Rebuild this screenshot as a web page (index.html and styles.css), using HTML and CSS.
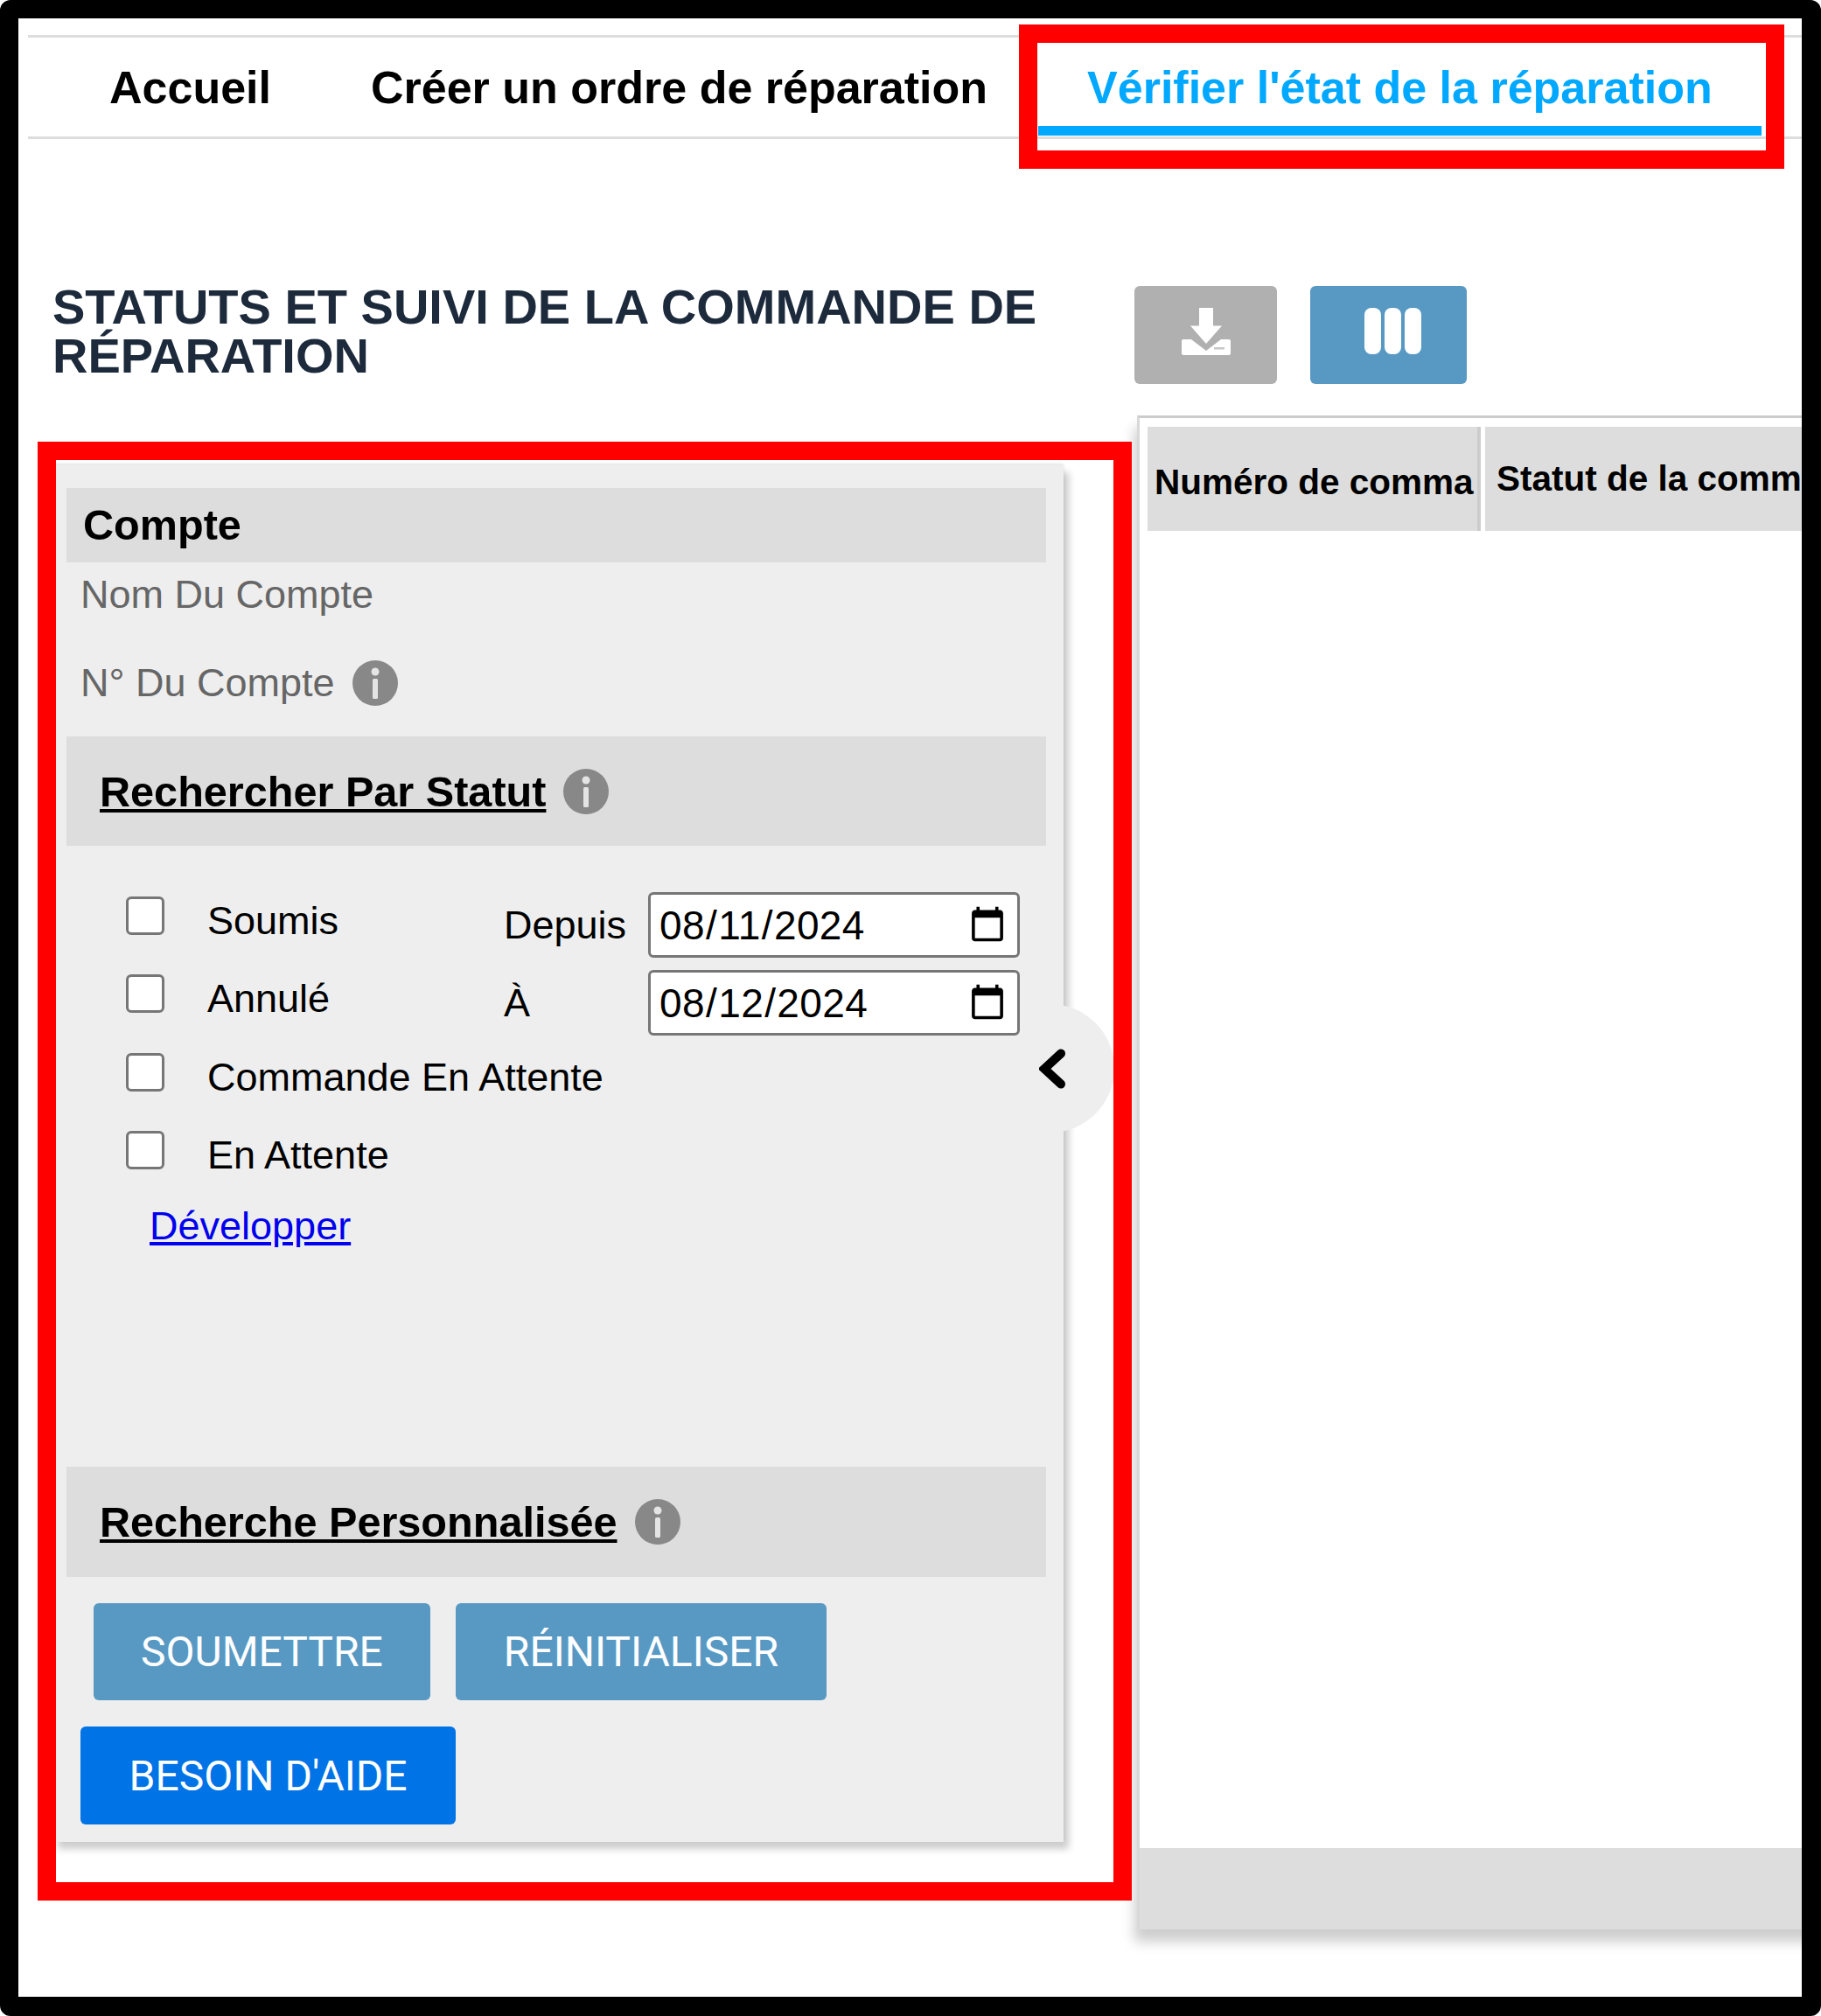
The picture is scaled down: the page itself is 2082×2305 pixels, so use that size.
FILE: index.html
```html
<!DOCTYPE html>
<html lang="fr">
<head>
<meta charset="utf-8">
<title>Statuts et suivi</title>
<link rel="stylesheet" href="styles.css">
</head>
<body>
<svg class="defs" width="0" height="0" aria-hidden="true">
  <symbol id="info" viewBox="0 0 52 52">
    <circle cx="26" cy="26" r="26" fill="#888"/>
    <circle cx="26" cy="13" r="4.5" fill="#e4e4e4"/>
    <rect x="23" y="21" width="6" height="23" rx="1.5" fill="#e4e4e4"/>
  </symbol>
</svg>
<div class="frame">
  <nav class="nav">
    <a class="tab">Accueil</a>
    <a class="tab">Créer un ordre de réparation</a>
    <a class="tab tab-active">Vérifier l'état de la réparation</a>
  </nav>
  <div class="main">
    <div class="left">
      <h1 class="title">STATUTS ET SUIVI DE LA COMMANDE DE RÉPARATION</h1>
      <aside class="panel">
        <div class="sec sec-account">Compte</div>
        <div class="field">Nom Du Compte</div>
        <div class="field field-info">N° Du Compte <svg class="info"><use href="#info"/></svg></div>
        <div class="sec sec-link"><a>Rechercher Par Statut</a><svg class="info"><use href="#info"/></svg></div>
        <div class="status">
          <div class="checks">
            <label class="check"><input type="checkbox"><span>Soumis</span></label>
            <label class="check"><input type="checkbox"><span>Annulé</span></label>
            <label class="check"><input type="checkbox"><span>Commande En Attente</span></label>
            <label class="check"><input type="checkbox"><span>En Attente</span></label>
          </div>
          <div class="dates">
            <label class="date"><span>Depuis</span><input type="date" value="2024-08-11"></label>
            <label class="date"><span>À</span><input type="date" value="2024-08-12"></label>
          </div>
        </div>
        <a class="expand">Développer</a>
        <div class="sec sec-link sec-custom"><a>Recherche Personnalisée</a><svg class="info"><use href="#info"/></svg></div>
        <div class="actions">
          <button class="btn">SOUMETTRE</button>
          <button class="btn btn-reset">RÉINITIALISER</button>
        </div>
        <button class="btn btn-help">BESOIN D'AIDE</button>
        <div class="collapse">
          <svg viewBox="0 0 30 46" width="30" height="46"><path d="M25 5.500 L6 23 L25 40.500" fill="none" stroke="#000" stroke-width="10" stroke-linecap="round" stroke-linejoin="miter"/></svg>
        </div>
      </aside>
    </div>
    <div class="right">
      <div class="tools">
        <button class="tool tool-off">
          <svg viewBox="0 0 56 54" width="56" height="54"><path d="M20 0h16v20.500h10L28 41 10 20.500h10z" fill="#fff"/><path d="M2 36h9l17 13 17-13h9a2 2 0 0 1 2 2v14a2 2 0 0 1-2 2H2a2 2 0 0 1-2-2V38a2 2 0 0 1 2-2z" fill="#fff"/><rect x="37" y="45" width="12" height="2.500" fill="#c8c8c8"/></svg>
        </button>
        <button class="tool tool-on">
          <svg viewBox="0 0 65 53" width="65" height="53"><rect x="0" width="19" height="53" rx="8" fill="#fff"/><rect x="23" width="19" height="53" rx="8" fill="#fff"/><rect x="46" width="19" height="53" rx="8" fill="#fff"/></svg>
        </button>
      </div>
      <section class="grid">
        <div class="grid-head">
          <div class="cell cell-a">Numéro de comma</div>
          <div class="cell cell-b">Statut de la commande</div>
        </div>
        <div class="grid-body"></div>
        <div class="grid-foot"></div>
      </section>
    </div>
  </div>
  <div class="mark mark-tab"></div>
  <div class="mark mark-panel"></div>
</div>
</body>
</html>
```
FILE: styles.css
```css
* { box-sizing: border-box; }
html, body { margin: 0; padding: 0; background: #fff; }
body { font-family: "Liberation Sans", Arial, sans-serif; color: #000; }
.defs { position: absolute; }

.frame {
  position: relative;
  width: 2082px;
  height: 2305px;
  border: solid #000;
  border-width: 21px 22px 22px 21px;
  border-radius: 12px;
  overflow: hidden;
  background: #fff;
}

.nav {
  display: flex;
  gap: 2px;
  margin: 19px 0 0 11px;
  height: 119px;
  padding-left: 37px;
  border-top: 3px solid #ddd;
  border-bottom: 3px solid #ddd;
}
.tab {
  display: block;
  height: 112px;
  padding: 27px 56px 0;
  border-bottom: 11px solid transparent;
  font-size: 52px;
  line-height: 60px;
  font-weight: 700;
  white-space: nowrap;
}
.tab-active { color: #00a8ff; border-bottom-color: #00a8ff; }

.main { display: flex; align-items: flex-start; }
.left { width: 1276px; flex: none; padding-top: 164px; }
.title {
  margin: 0 0 0 39px;
  width: 1130px;
  font-size: 56px;
  line-height: 56px;
  font-weight: 700;
  color: #1c2a3c;
}
.right { flex: none; width: 800px; padding-top: 168px; }

.panel {
  position: relative;
  margin: 97px 0 0 39px;
  width: 1156px;
  height: 1574px;
  padding: 26px 0 0 16px;
  background: #eee;
  box-shadow: 6px 8px 8px rgba(0, 0, 0, .2), 0 -2px 3px rgba(0, 0, 0, .1);
}
.sec {
  width: 1120px;
  background: #ddd;
  font-weight: 700;
  font-size: 48.600px;
}
.sec-account { height: 85px; padding-left: 19px; line-height: 84px; }
.field {
  display: flex;
  align-items: center;
  gap: 20px;
  height: 100px;
  padding: 0 0 26px 16px;
  font-size: 45px;
  line-height: 52px;
  color: #666;
}
.field-info { height: 99px; padding-bottom: 24px; }
.sec-link {
  display: flex;
  align-items: center;
  gap: 20px;
  height: 125px;
  padding-left: 38px;
  color: #000;
}
.sec-link a { text-decoration: underline; }
.info { width: 52px; height: 52px; flex: none; }

.status { display: flex; padding: 53px 0 0 68px; }
.checks { width: 432px; margin-top: -18px; }
.check {
  display: flex;
  align-items: center;
  gap: 49px;
  height: 89.500px;
  font-size: 45px;
  white-space: nowrap;
}
.check input {
  appearance: none;
  width: 44px;
  height: 44px;
  margin: 0;
  flex: none;
  border: 3px solid #767676;
  border-radius: 6px;
  background: #fff;
}
.check span { position: relative; top: 6px; }
.dates { position: relative; z-index: 1; display: flex; flex-direction: column; gap: 14px; }
.date { display: flex; align-items: center; font-size: 45px; }
.date span { width: 165px; }
.date input {
  width: 425px;
  height: 75px;
  padding: 0 9px;
  font: 46px "Liberation Sans", Arial, sans-serif;
  letter-spacing: .4px;
  border: 3px solid #767676;
  border-radius: 6px;
  background: #fff;
  color: #000;
}
.expand {
  display: block;
  margin: 14px 0 0 95px;
  font-size: 45px;
  line-height: 56px;
  color: #00e;
  text-decoration: underline;
}
.sec-custom { margin-top: 247px; height: 126px; }

.actions { display: flex; gap: 29px; padding: 30px 0 0 31px; }
.btn {
  height: 111px;
  padding: 0 54px;
  border: 0;
  border-radius: 6px;
  background: #5899c4;
  color: #fff;
  font: 48px Roboto, "Liberation Sans", sans-serif;
  white-space: nowrap;
}
.btn-reset { padding: 0 55px; }
.btn-help { display: block; margin: 30px 0 0 16px; height: 112px; padding: 0 55.500px; background: #0073e6; }

.collapse {
  position: absolute;
  right: -58px;
  top: 616px;
  width: 147px;
  height: 147px;
  border-radius: 50%;
  background: #eee;
  display: flex;
  align-items: center;
  justify-content: flex-end;
  padding-right: 56px;
}
.collapse svg { display: block; }

.tools { display: flex; gap: 38px; height: 112px; }
.tool {
  height: 112px;
  border: 0;
  border-radius: 6px;
  padding: 0 0 9px;
  display: flex;
  align-items: center;
  justify-content: center;
}
.tool-off { width: 163px; background: #b0b0b0; }
.tool-on { width: 179px; background: #5899c4; padding-left: 9px; }

.grid {
  margin: 36px 0 0 3px;
  width: 900px;
  height: 1731px;
  border-top: 3px solid #ccc;
  border-left: 3px solid #d8d8d8;
  box-shadow: -3px 14px 14px rgba(0, 0, 0, .2);
  display: flex;
  flex-direction: column;
}
.grid-head { display: flex; gap: 5px; padding: 10px 0 0 9px; }
.cell {
  flex: none;
  height: 119px;
  background: #ddd;
  font-size: 40.500px;
  font-weight: 700;
  white-space: nowrap;
  overflow: hidden;
  display: flex;
  align-items: center;
}
.cell-a { width: 381px; padding: 8px 0 0 8px; border-right: 4px solid #ccc; }
.cell-b { width: 520px; padding: 0 0 0 13px; }
.grid-body { flex: 1; }
.grid-foot { height: 93px; background: #ddd; }

.mark { position: absolute; border: 21px solid #f00; pointer-events: none; }
.mark-tab { left: 1144px; top: 7px; width: 875px; height: 165px; }
.mark-panel { left: 22px; top: 484px; width: 1251px; height: 1668px; }
```
